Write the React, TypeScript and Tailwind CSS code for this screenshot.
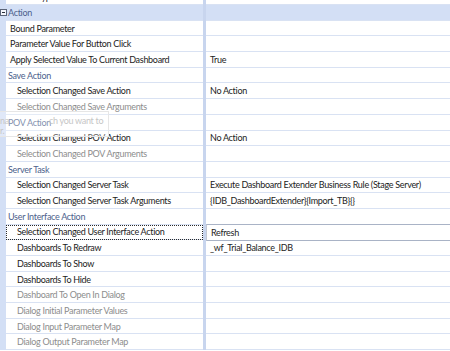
import React from "react";

type Kind = "cat" | "sub" | "prop" | "subprop";
interface Row {
  name: string;
  value?: string;
  kind: Kind;
  disabled?: boolean;
  focus?: boolean;
}

const rows: Row[] = [
  { name: "Button Type", value: "Standard", kind: "prop" },
  { name: "Action", kind: "cat" },
  { name: "Bound Parameter", kind: "prop" },
  { name: "Parameter Value For Button Click", kind: "prop" },
  { name: "Apply Selected Value To Current Dashboard", value: "True", kind: "prop" },
  { name: "Save Action", kind: "sub" },
  { name: "Selection Changed Save Action", value: "No Action", kind: "subprop" },
  { name: "Selection Changed Save Arguments", kind: "subprop", disabled: true },
  { name: "POV Action", kind: "sub" },
  { name: "Selection Changed POV Action", value: "No Action", kind: "subprop" },
  { name: "Selection Changed POV Arguments", kind: "subprop", disabled: true },
  { name: "Server Task", kind: "sub" },
  {
    name: "Selection Changed Server Task",
    value: "Execute Dashboard Extender Business Rule (Stage Server)",
    kind: "subprop",
  },
  {
    name: "Selection Changed Server Task Arguments",
    value: "{IDB_DashboardExtender}{Import_TB}{}",
    kind: "subprop",
  },
  { name: "User Interface Action", kind: "sub" },
  { name: "Selection Changed User Interface Action", value: "Refresh", kind: "subprop", focus: true },
  { name: "Dashboards To Redraw", value: "_wf_Trial_Balance_IDB", kind: "subprop" },
  { name: "Dashboards To Show", kind: "subprop" },
  { name: "Dashboards To Hide", kind: "subprop" },
  { name: "Dashboard To Open In Dialog", kind: "subprop", disabled: true },
  { name: "Dialog Initial Parameter Values", kind: "subprop", disabled: true },
  { name: "Dialog Input Parameter Map", kind: "subprop", disabled: true },
  { name: "Dialog Output Parameter Map", kind: "subprop", disabled: true },
];

const CollapseBox = () => (
  <svg width="7" height="7" viewBox="0 0 7 7" className="absolute left-0 top-[4px]">
    <rect x="0.5" y="0.5" width="6" height="6" fill="#f4f6fb" stroke="#5b6478" />
    <line x1="2" y1="3.5" x2="5" y2="3.5" stroke="#2a2f3a" />
  </svg>
);

const PropRow: React.FC<{ row: Row }> = ({ row }) => {
  const isCat = row.kind === "cat";
  const isSub = row.kind === "sub";
  const pad =
    row.kind === "cat" || row.kind === "sub"
      ? "pl-[2px]"
      : row.kind === "prop"
      ? "pl-[4px]"
      : "pl-[11px]";
  const color = isCat || isSub ? "text-[#4d5f8c]" : row.disabled ? "text-[#8d8d8d]" : "text-[#222]";

  return (
    <div className={`relative flex h-[15.7px] ${isCat ? "bg-[#d3dff5]" : ""}`}>
      <div className="w-[6px] shrink-0 bg-[#d3dff5]" />
      {isCat && <CollapseBox />}
      <div
        className={`flex w-[197px] shrink-0 items-center border-b border-[#d9e2f3] ${pad} ${color} ${
          row.focus ? "outline-1 outline-dotted -outline-offset-1 outline-[#2a2a2a]" : ""
        }`}
      >
        <span className="whitespace-nowrap leading-none">{row.name}</span>
      </div>
      <div className="w-[3px] shrink-0 bg-[#c8d5ee]" />
      <div
        className={`flex min-w-0 flex-1 items-center border-b border-[#d9e2f3] pl-[4px] text-[#222] ${
          row.focus ? "-mt-[1px] h-[17px] border-y border-l border-y-[#a9b3c6] border-l-[#c4c9d3]" : ""
        }`}
      >
        <span className="whitespace-nowrap leading-none">{row.value ?? ""}</span>
      </div>
    </div>
  );
};

export default function App() {
  return (
    <div
      className="relative h-[351px] w-[450px] overflow-hidden bg-white text-[9px] tracking-[-0.3px]"
      style={{ fontFamily: 'Lato, "Open Sans", sans-serif' }}
    >
      <div className="-mt-[10.7px]">
        {rows.map((r) => (
          <PropRow key={r.name} row={r} />
        ))}
      </div>
      {/* faded tooltip ghost left over the grid */}
      <div className="pointer-events-none absolute left-0 top-[111px] h-[26px] w-[109px] border border-l-0 border-[#e6e6e6] bg-white/30 leading-none text-[#c6c6c6]">
        <span className="absolute left-0 top-[4px]">na</span>
        <span className="absolute left-[49px] top-[4px]">ch you want to</span>
        <span className="absolute left-0 top-[14px]">r.</span>
      </div>
    </div>
  );
}
